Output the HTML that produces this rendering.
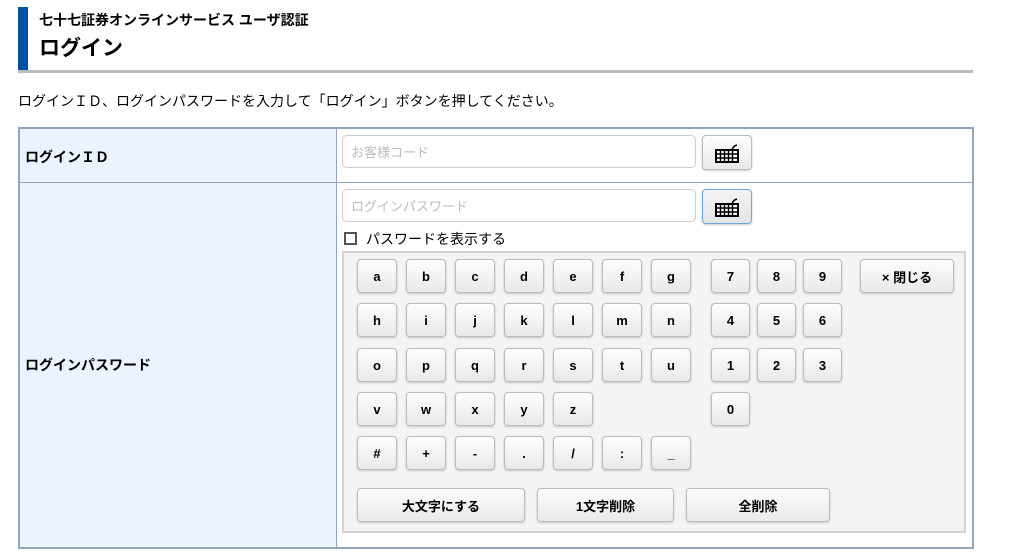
<!DOCTYPE html>
<html><head><meta charset="utf-8"><style>
*{box-sizing:border-box;margin:0;padding:0}
body{width:1035px;height:553px;background:#fff;font-family:"Liberation Sans","Noto Sans CJK JP",sans-serif;position:relative;overflow:hidden;color:#000}
.a{position:absolute}
.key{position:absolute;width:40px;height:34px;border:1px solid #bbb;border-radius:4px;background:linear-gradient(#fdfdfd,#e9e9e9);box-shadow:0 1px 2px rgba(0,0,0,.2);font-weight:bold;font-size:13px;display:flex;align-items:center;justify-content:center}
.inp{position:absolute;left:342px;width:354px;height:33px;border:1px solid #ccc;border-radius:5px;color:#bbb;font-size:13px;padding:6px 0 0 8px;background:#fff}
.kb{position:absolute;left:702px;width:50px;height:35px;border:1px solid #bbb;border-radius:4px;background:linear-gradient(#fdfdfd,#e9e9e9);box-shadow:0 1px 2px rgba(0,0,0,.2);display:flex;align-items:center;justify-content:center}
</style></head><body>
<div class="a" style="left:18px;top:7px;width:10px;height:65px;background:#0050a0"></div>
<div class="a" style="left:18px;top:70px;width:955px;height:3px;background:#bcbcbc"></div>
<div class="a" style="left:39px;top:10px;font-size:14px;font-weight:bold">七十七証券オンラインサービス ユーザ認証</div>
<div class="a" style="left:39px;top:32px;font-size:21px;font-weight:bold">ログイン</div>
<div class="a" style="left:18px;top:91px;font-size:14px">ログインＩＤ、ログインパスワードを入力して「ログイン」ボタンを押してください。</div>
<div class="a" style="left:18px;top:127px;width:956px;height:422px;border:2px solid #93a5bd;background:#fff"></div>
<div class="a" style="left:20px;top:129px;width:316px;height:418px;background:#eaf3fe"></div>
<div class="a" style="left:336px;top:129px;width:1px;height:418px;background:#93a5bd"></div>
<div class="a" style="left:20px;top:182px;width:952px;height:1px;background:#93a5bd"></div>
<div class="a" style="left:25px;top:147px;font-size:14px;font-weight:bold">ログインＩＤ</div>
<div class="a" style="left:25px;top:355px;font-size:14px;font-weight:bold">ログインパスワード</div>
<div class="inp" style="top:135px">お客様コード</div>
<div class="inp" style="top:189px">ログインパスワード</div>
<div class="kb" style="top:135px"><svg width="24" height="20" viewBox="0 0 24 20"><path d="M17 7 Q18 3 22 2" stroke="#000" stroke-width="1.5" fill="none"/><rect x="1" y="7" width="22" height="12" fill="#fff" stroke="#000" stroke-width="2"/><path d="M1 11H23M1 15H23M5.5 7V19M9.5 7V19M13.5 7V19M17.5 7V19" stroke="#000" stroke-width="1.5"/></svg></div>
<div class="kb" style="top:189px;border-color:#6fa6dc;background:linear-gradient(#f4f4f4,#e4e4e4)"><svg width="24" height="20" viewBox="0 0 24 20"><path d="M17 7 Q18 3 22 2" stroke="#000" stroke-width="1.5" fill="none"/><rect x="1" y="7" width="22" height="12" fill="#fff" stroke="#000" stroke-width="2"/><path d="M1 11H23M1 15H23M5.5 7V19M9.5 7V19M13.5 7V19M17.5 7V19" stroke="#000" stroke-width="1.5"/></svg></div>
<div class="a" style="left:344px;top:232px;width:13px;height:13px;border:2px solid #555"></div>
<div class="a" style="left:366px;top:229px;font-size:14px">パスワードを表示する</div>
<div class="a" style="left:342px;top:251px;width:624px;height:282px;background:#f4f4f4;border:2px solid #d4d4d4"></div>
<div id="keys"></div>
<script>
var rows=[["a","b","c","d","e","f","g"],["h","i","j","k","l","m","n"],["o","p","q","r","s","t","u"],["v","w","x","y","z"],["#","+","-",".","/",":","_"]];
var ys=[259,303,348,392,436],h="";
rows.forEach(function(r,i){r.forEach(function(c,j){h+='<div class="key" style="left:'+(357+49*j)+'px;top:'+ys[i]+'px">'+c+'</div>';});});
var d=[["7","8","9"],["4","5","6"],["1","2","3"],["0"]];
d.forEach(function(r,i){r.forEach(function(c,j){h+='<div class="key" style="width:39px;left:'+(711+46*j)+'px;top:'+ys[i]+'px">'+c+'</div>';});});
h+='<div class="key" style="left:860px;top:259px;width:94px">× 閉じる</div>';
h+='<div class="key" style="left:357px;top:488px;width:168px">大文字にする</div>';
h+='<div class="key" style="left:537px;top:488px;width:137px">1文字削除</div>';
h+='<div class="key" style="left:686px;top:488px;width:144px">全削除</div>';
document.getElementById("keys").innerHTML=h;
</script>
</body></html>
